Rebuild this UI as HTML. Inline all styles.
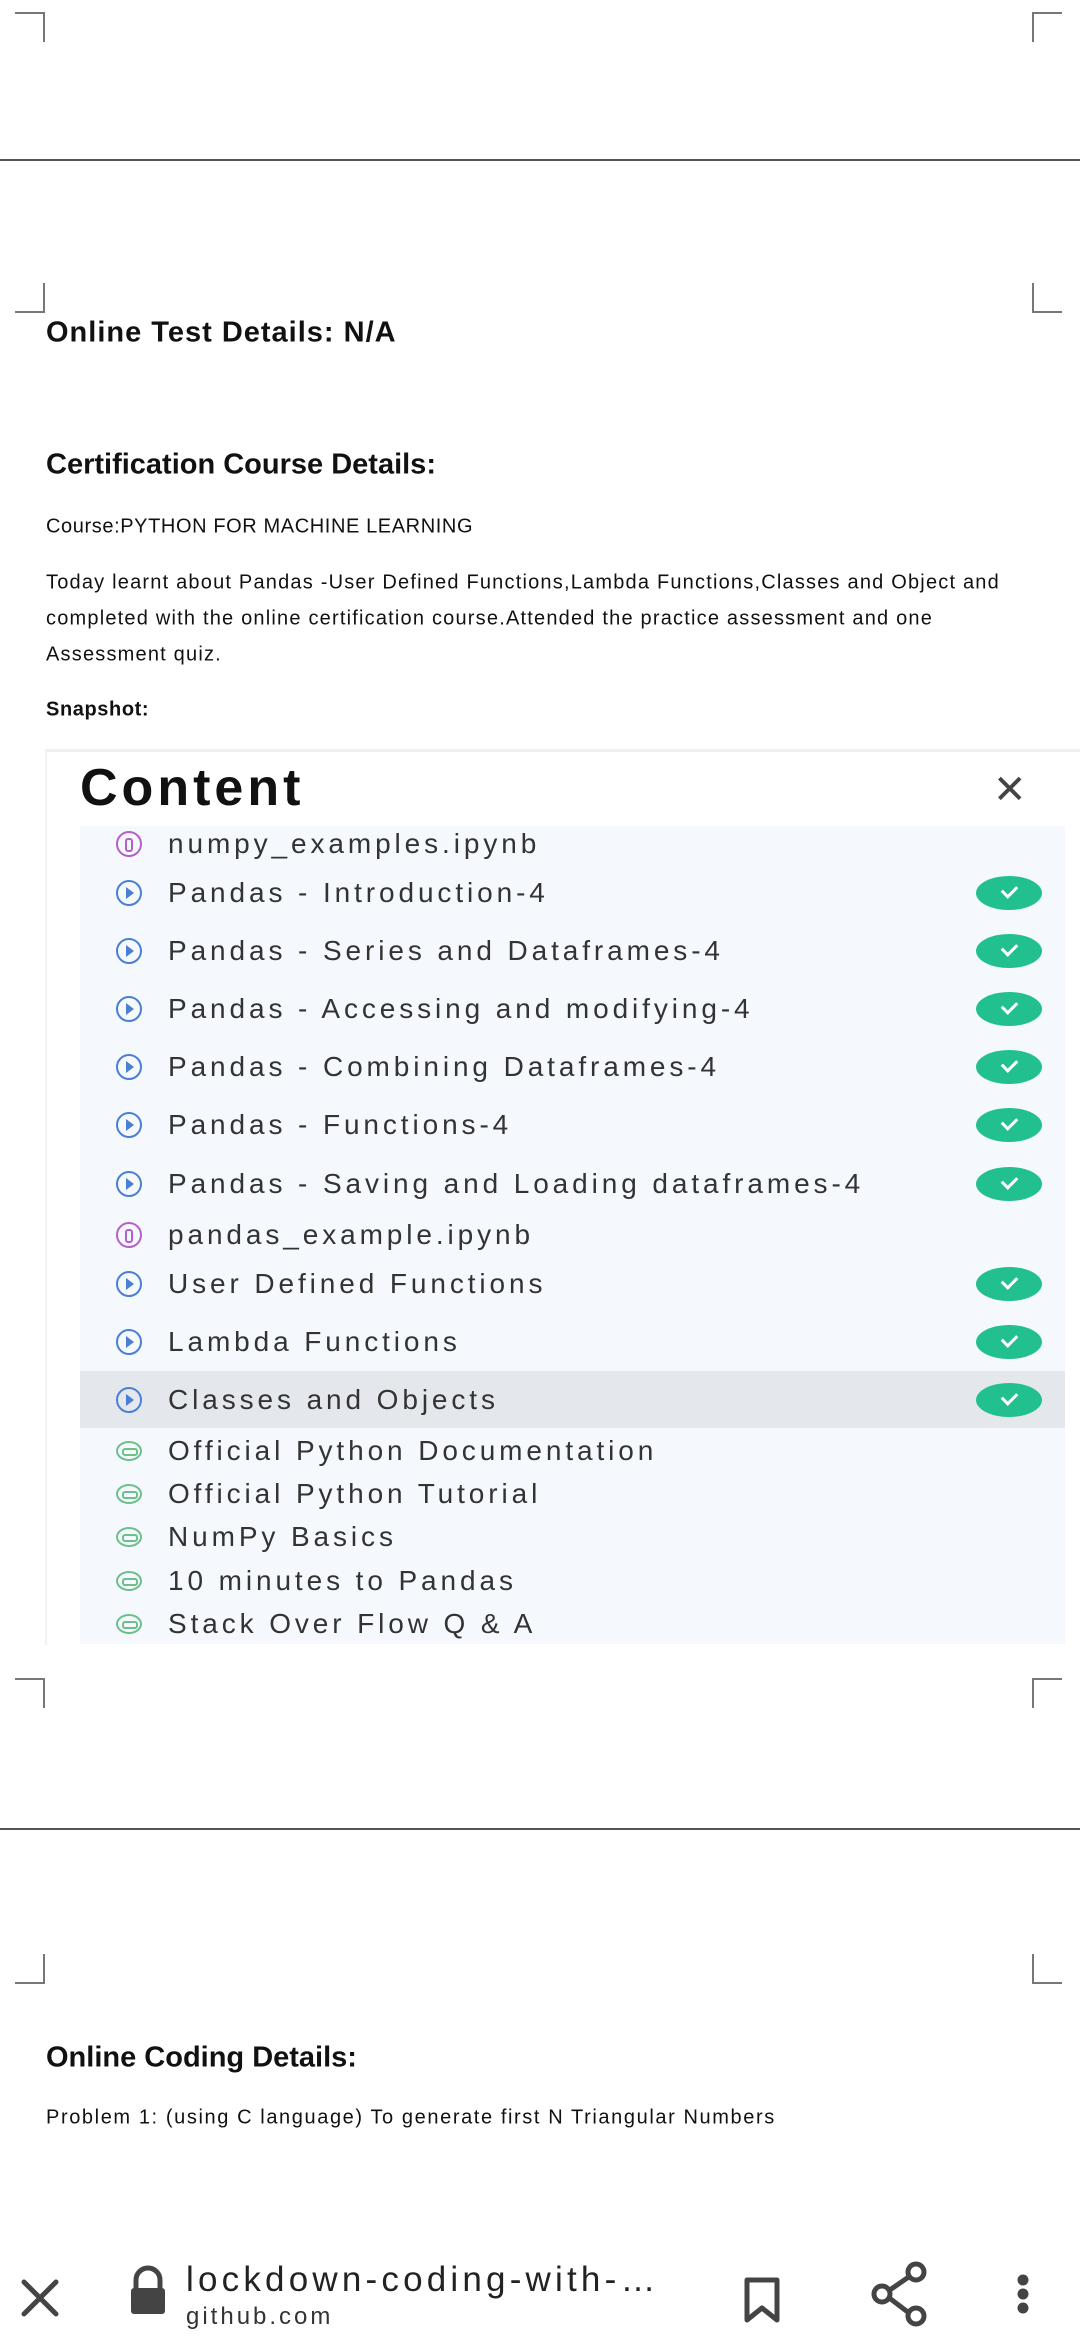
<!DOCTYPE html>
<html><head><meta charset="utf-8"><style>
*{margin:0;padding:0;box-sizing:border-box}
body{width:1080px;height:2340px;background:#fff;position:relative;overflow:hidden;font-family:"Liberation Sans",sans-serif;color:#111}
.a{position:absolute;white-space:nowrap}
.c{position:absolute;width:30px;height:30px;border-color:#777;border-style:solid;border-width:0}
.hl{position:absolute;left:0;width:1080px;height:2px;background:#555}
h2{position:absolute;left:46px;font-size:29px;font-weight:bold;transform:translateY(-50%)}
.t{position:absolute;left:46px;font-size:20px;transform:translateY(-50%);letter-spacing:1.2px}
.row{position:absolute;left:0;width:985px;height:40px;transform:translateY(-50%)}
.row .ic{position:absolute;left:36px;top:8px;width:26px;height:26px;border:2.5px solid #4a7fd4;border-radius:50%}
.row .ic:after{content:"";position:absolute;left:8px;top:5px;border-left:8px solid #4a7fd4;border-top:6px solid transparent;border-bottom:6px solid transparent}
.row .ic.p{border-color:#b560c8}
.row .ic.p:after{border:2px solid #b560c8;width:4px;height:10px;border-radius:3px;left:7px;top:5px}
.row .ic.g{border-color:#6cc08a;height:20px;top:11px}
.row .ic.g:after{border:none;width:12px;height:4px;border:2px solid #6cc08a;border-radius:3px;left:4px;top:5px}
.row span{position:absolute;left:88px;top:5px;font-size:28px;color:#333;letter-spacing:3.9px}
.ck{position:absolute;left:896px;top:4px;width:66px;height:34px;background:#22c08f;border-radius:50%}
.ck:after{content:"";position:absolute;left:26px;top:9px;width:12px;height:7px;border-left:3px solid #fff;border-bottom:3px solid #fff;transform:rotate(-45deg)}
</style></head><body>
<div class="c" style="left:15px;top:12px;border-right-width:2px;border-top-width:2px;width:30px"></div>
<div class="c" style="left:1032px;top:12px;border-left-width:2px;border-top-width:2px"></div>
<div class="hl" style="top:159px"></div>
<div class="c" style="left:15px;top:283px;border-right-width:2px;border-bottom-width:2px"></div>
<div class="c" style="left:1032px;top:283px;border-left-width:2px;border-bottom-width:2px"></div>

<h2 style="top:333px;letter-spacing:1px">Online Test Details: N/A</h2>
<h2 style="top:465px">Certification Course Details:</h2>
<div class="t" style="top:527px;letter-spacing:0.6px">Course:PYTHON FOR MACHINE LEARNING</div>
<div class="t" style="top:583px">Today learnt about Pandas -User Defined Functions,Lambda Functions,Classes and Object and</div>
<div class="t" style="top:619px">completed with the online certification course.Attended the practice assessment and one</div>
<div class="t" style="top:655px">Assessment quiz.</div>
<div class="t" style="top:710px;font-weight:bold;letter-spacing:0.6px">Snapshot:</div>

<div class="a" style="left:45px;top:749px;width:1035px;height:896px;background:#fff;border-top:3px solid #eee;border-left:2px solid #f2f2f2">
 <div class="a" style="left:33px;top:6px;font-size:52px;font-weight:bold;color:#111;letter-spacing:4px">Content</div>
 <div class="a" style="left:946px;top:18px;font-size:40px;color:#444;line-height:40px">✕</div>
 <div class="a" style="left:33px;top:74px;width:985px;height:818px;background:#f5f9fe">
  <div class="a" style="left:0;top:545px;width:985px;height:57px;background:#e4e8ec"></div>
  <div class="row" style="top:17px"><div class="ic p"></div><span>numpy_examples.ipynb</span></div>
  <div class="row" style="top:66px"><div class="ic"></div><span>Pandas - Introduction-4</span><div class="ck"></div></div>
  <div class="row" style="top:124px"><div class="ic"></div><span>Pandas - Series and Dataframes-4</span><div class="ck"></div></div>
  <div class="row" style="top:182px"><div class="ic"></div><span>Pandas - Accessing and modifying-4</span><div class="ck"></div></div>
  <div class="row" style="top:240px"><div class="ic"></div><span>Pandas - Combining Dataframes-4</span><div class="ck"></div></div>
  <div class="row" style="top:298px"><div class="ic"></div><span>Pandas - Functions-4</span><div class="ck"></div></div>
  <div class="row" style="top:357px"><div class="ic"></div><span>Pandas - Saving and Loading dataframes-4</span><div class="ck"></div></div>
  <div class="row" style="top:408px"><div class="ic p"></div><span>pandas_example.ipynb</span></div>
  <div class="row" style="top:457px"><div class="ic"></div><span>User Defined Functions</span><div class="ck"></div></div>
  <div class="row" style="top:515px"><div class="ic"></div><span>Lambda Functions</span><div class="ck"></div></div>
  <div class="row" style="top:573px"><div class="ic"></div><span>Classes and Objects</span><div class="ck"></div></div>
  <div class="row" style="top:624px"><div class="ic g"></div><span>Official Python Documentation</span></div>
  <div class="row" style="top:667px"><div class="ic g"></div><span>Official Python Tutorial</span></div>
  <div class="row" style="top:710px"><div class="ic g"></div><span>NumPy Basics</span></div>
  <div class="row" style="top:754px"><div class="ic g"></div><span>10 minutes to Pandas</span></div>
  <div class="row" style="top:797px"><div class="ic g"></div><span>Stack Over Flow Q &amp; A</span></div>
 </div>
</div>

<div class="c" style="left:15px;top:1678px;border-right-width:2px;border-top-width:2px"></div>
<div class="c" style="left:1032px;top:1678px;border-left-width:2px;border-top-width:2px"></div>
<div class="hl" style="top:1828px"></div>
<div class="c" style="left:15px;top:1954px;border-right-width:2px;border-bottom-width:2px"></div>
<div class="c" style="left:1032px;top:1954px;border-left-width:2px;border-bottom-width:2px"></div>

<h2 style="top:2058px">Online Coding Details:</h2>
<div class="t" style="top:2118px;letter-spacing:1.6px">Problem 1: (using C language) To generate first N Triangular Numbers</div>

<svg class="a" style="left:0;top:2250px" width="1080" height="90">
 <g stroke="#444" stroke-width="5" fill="none" stroke-linecap="round">
  <path d="M24 32 L56 64 M56 32 L24 64"/>
  <path d="M136 38 v-8 a12 12 0 0 1 24 0 v8"/>
  <path d="M747 30 h30 v40 l-15 -12 l-15 12 z" stroke-linejoin="round"/>
  <path d="M913 24 L884 44 L913 66"/>
 </g>
 <rect x="131" y="38" width="34" height="26" rx="3" fill="#444"/>
 <circle cx="916" cy="22" r="8" fill="#fff" stroke="#444" stroke-width="5"/>
 <circle cx="882" cy="44" r="8" fill="#fff" stroke="#444" stroke-width="5"/>
 <circle cx="916" cy="66" r="8" fill="#fff" stroke="#444" stroke-width="5"/>
 <circle cx="1023" cy="30" r="5.5" fill="#444"/><circle cx="1023" cy="44" r="5.5" fill="#444"/><circle cx="1023" cy="58" r="5.5" fill="#444"/>
</svg>
<div class="a" style="left:186px;top:2260px;font-size:35px;color:#222;letter-spacing:4.2px">lockdown-coding-with-…</div>
<div class="a" style="left:186px;top:2303px;font-size:24px;color:#333;letter-spacing:3px">github.com</div>
</body></html>
